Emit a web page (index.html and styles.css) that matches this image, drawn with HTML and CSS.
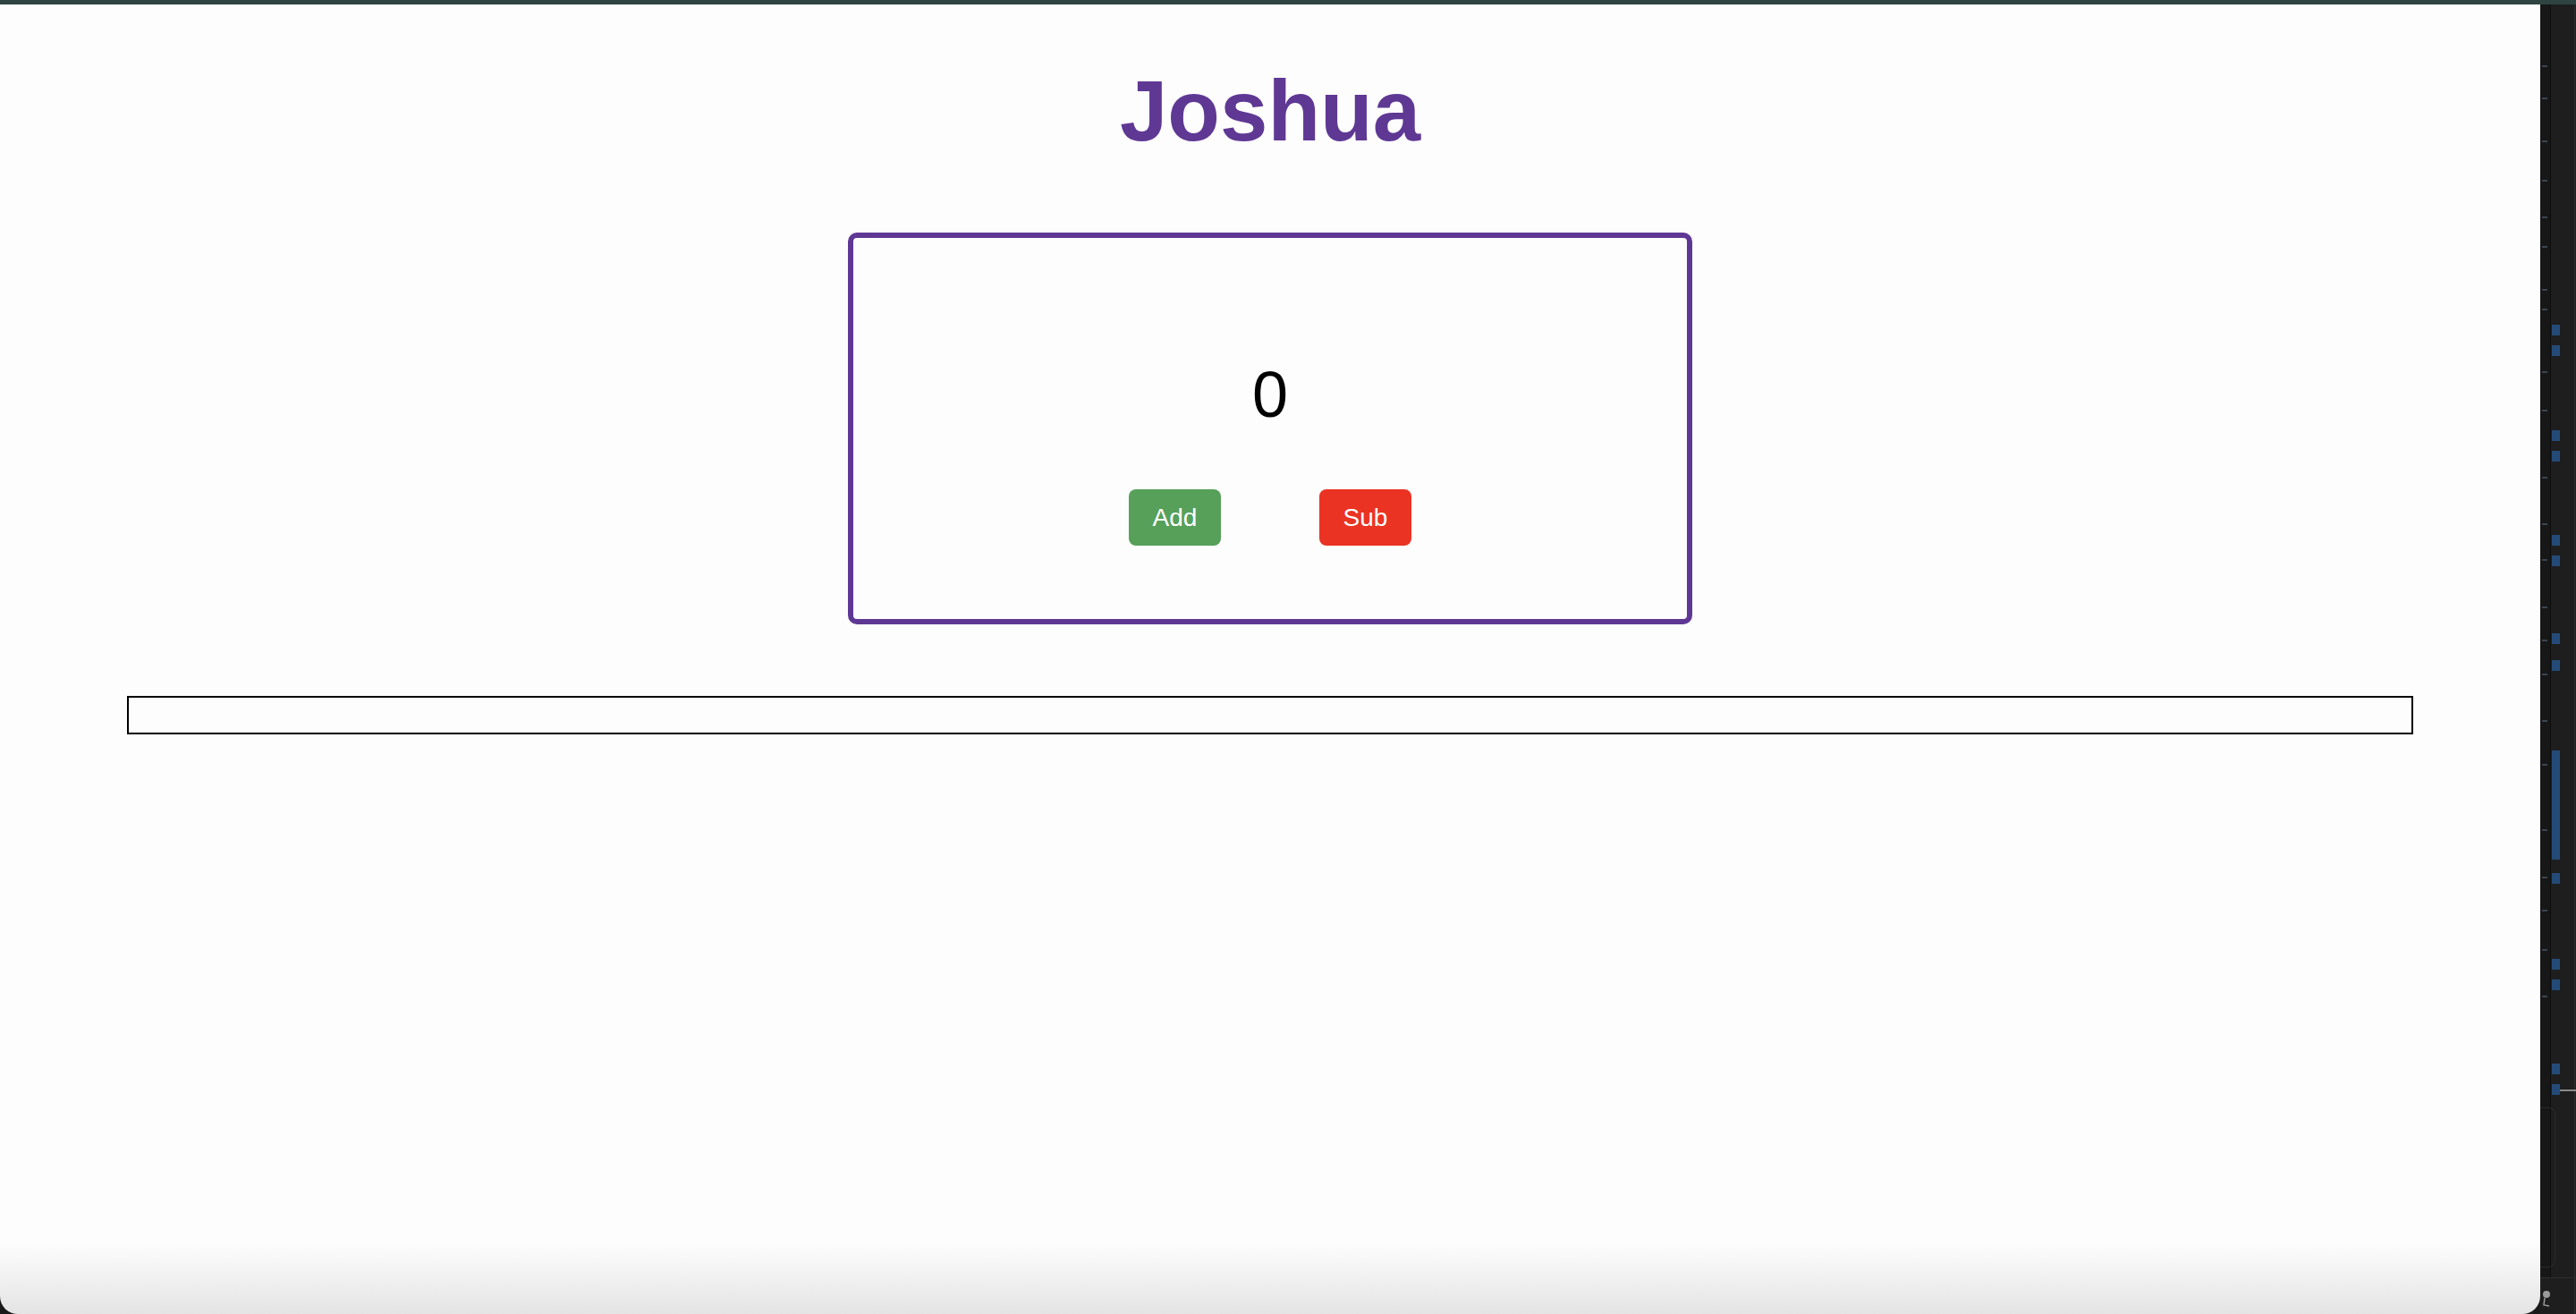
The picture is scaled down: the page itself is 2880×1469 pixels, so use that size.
FILE: index.html
```html
<!DOCTYPE html>
<html lang="en">
<head>
<meta charset="utf-8">
<title>Joshua</title>
<link rel="stylesheet" href="styles.css">
</head>
<body>
<div class="topbar"></div>
<div class="window">
  <main class="page">
    <h1 class="title">Joshua</h1>
    <section class="counter">
      <div class="count">0</div>
      <div class="actions">
        <button class="btn btn-add">Add</button>
        <button class="btn btn-sub">Sub</button>
      </div>
    </section>
    <input class="field" type="text">
  </main>
  <aside class="strip">
    <div class="gutter"></div>
    <div class="minimap"></div>
    <div class="edge"></div>
    <span class="mark" style="top:358px"></span>
    <span class="mark" style="top:381px"></span>
    <span class="mark" style="top:476px"></span>
    <span class="mark" style="top:499px"></span>
    <span class="mark" style="top:593px"></span>
    <span class="mark" style="top:616px"></span>
    <span class="mark" style="top:703px"></span>
    <span class="mark" style="top:733px"></span>
    <span class="mark" style="top:834px;height:122px"></span>
    <span class="mark" style="top:971px"></span>
    <span class="mark" style="top:1067px"></span>
    <span class="mark" style="top:1090px"></span>
    <span class="mark" style="top:1184px"></span>
    <span class="mark" style="top:1207px"></span>
    <span class="crumb" style="top:68px"></span>
    <span class="crumb" style="top:104px"></span>
    <span class="crumb" style="top:152px"></span>
    <span class="crumb" style="top:196px"></span>
    <span class="crumb" style="top:237px"></span>
    <span class="crumb" style="top:270px"></span>
    <span class="crumb" style="top:318px"></span>
    <span class="crumb" style="top:340px"></span>
    <span class="crumb" style="top:410px"></span>
    <span class="crumb" style="top:453px"></span>
    <span class="crumb" style="top:528px"></span>
    <span class="crumb" style="top:580px"></span>
    <span class="crumb" style="top:620px"></span>
    <span class="crumb" style="top:673px"></span>
    <span class="crumb" style="top:710px"></span>
    <span class="crumb" style="top:748px"></span>
    <span class="crumb" style="top:800px"></span>
    <span class="crumb" style="top:849px"></span>
    <span class="crumb" style="top:922px"></span>
    <span class="crumb" style="top:975px"></span>
    <span class="crumb" style="top:1012px"></span>
    <span class="crumb" style="top:1056px"></span>
    <span class="crumb" style="top:1108px"></span>
    <span class="slider"></span>
    <span class="panel"></span>
    <span class="divider"></span>
    <svg class="person" width="10" height="22" viewBox="0 0 10 22">
      <circle cx="6" cy="5" r="4" fill="#9a9a9a"/>
      <path d="M4 9 L3 17 L9 18" fill="none" stroke="#9a9a9a" stroke-width="1.5"/>
    </svg>
  </aside>
</div>
</body>
</html>
```

FILE: styles.css
```css
* {
  box-sizing: border-box;
}

html, body {
  margin: 0;
  padding: 0;
  height: 100%;
}

body {
  background: #1a1a1a;
  display: flex;
  flex-direction: column;
  font-family: "Liberation Sans", Arial, sans-serif;
  overflow: hidden;
}

.topbar {
  height: 5px;
  flex: 0 0 5px;
  background: #2f4440;
}

.window {
  flex: 1;
  display: flex;
  min-height: 0;
}

.page {
  flex: 1;
  display: flex;
  flex-direction: column;
  align-items: center;
  background: linear-gradient(to bottom, #fdfdfd 0, #fdfdfd calc(100% - 80px), #e4e4e4 100%);
  border-bottom-left-radius: 20px;
  border-bottom-right-radius: 20px;
}

.title {
  margin: 64px 0 0;
  font-size: 96px;
  line-height: 1.15;
  font-weight: 700;
  color: #5f3894;
}

.counter {
  margin-top: 81px;
  width: 944px;
  height: 438px;
  border: 6px solid #5f3894;
  border-radius: 10px;
  display: flex;
  flex-direction: column;
  align-items: center;
  padding-top: 139px;
}

.count {
  font-size: 72px;
  line-height: 1;
  height: 72px;
  color: #000;
}

.actions {
  margin-top: 70px;
  display: flex;
  gap: 110px;
}

.btn {
  width: 103px;
  height: 63px;
  border: none;
  border-radius: 8px;
  color: #fff;
  font-family: "Liberation Sans", Arial, sans-serif;
  font-size: 28px;
  padding: 0;
  display: flex;
  align-items: center;
  justify-content: center;
}

.btn-add {
  background: #56a05a;
}

.btn-sub {
  background: #ea3323;
}

.field {
  display: block;
  margin-top: 80px;
  width: 90%;
  height: 43px;
  border: 2px solid #000;
  border-radius: 0;
  background: transparent;
  padding: 0 6px;
}

.strip {
  flex: 0 0 40px;
  position: relative;
  background: #1e1e1e;
}

.gutter {
  position: absolute;
  left: 0;
  top: 0;
  width: 12px;
  height: 1423px;
  background: #171717;
  border-right: 1px solid #0d0d0d;
}

.minimap {
  position: absolute;
  left: 13px;
  top: 0;
  width: 24px;
  height: 1423px;
  background: #1e1e1e;
}

.edge {
  position: absolute;
  right: 1px;
  top: 0;
  width: 1px;
  height: 100%;
  background: #303030;
}

.mark {
  position: absolute;
  left: 13px;
  width: 9px;
  height: 12px;
  background: #244b78;
}

.crumb {
  position: absolute;
  left: 2px;
  width: 6px;
  height: 2px;
  background: #3c4450;
}

.slider {
  position: absolute;
  left: 22px;
  top: 1213px;
  width: 18px;
  height: 2px;
  background: #8a8a8a;
}

.panel {
  position: absolute;
  left: 0;
  top: 1233px;
  width: 17px;
  height: 179px;
  border: 1px solid #2a2a2a;
  border-left: none;
  border-radius: 0 8px 8px 0;
}

.divider {
  position: absolute;
  left: 0;
  right: 0;
  top: 1423px;
  height: 1px;
  background: #2e2e2e;
}

.person {
  position: absolute;
  left: 1px;
  top: 1437px;
}
```
